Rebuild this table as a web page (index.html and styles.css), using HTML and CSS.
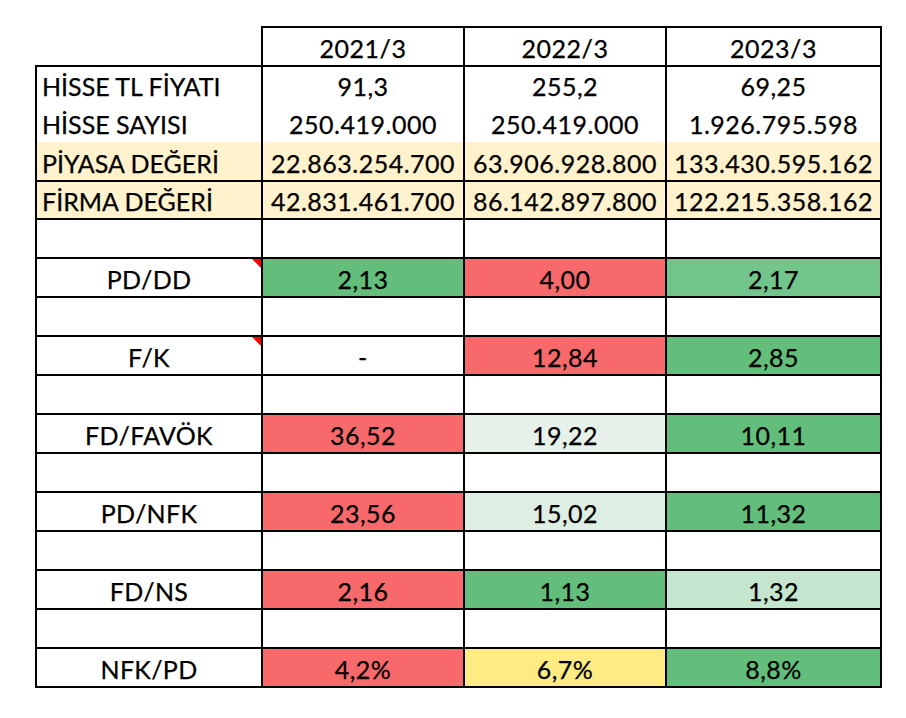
FILE: index.html
```html
<!DOCTYPE html>
<html lang="tr">
<head>
<meta charset="utf-8">
<title>Değerleme Tablosu</title>
<link rel="stylesheet" href="styles.css">
</head>
<body>
<div class="sheet">
<table class="grid">
  <colgroup>
    <col class="c-label"><col class="c-y1"><col class="c-y2"><col class="c-y3">
  </colgroup>
  <tr class="h-39">
    <td class="corner"></td>
    <td>2021/3</td><td>2022/3</td><td>2023/3</td>
  </tr>
  <tr class="h-38 open-bottom">
    <td class="left">HİSSE TL FİYATI</td><td>91,3</td><td>255,2</td><td>69,25</td>
  </tr>
  <tr class="h-38 open-top open-bottom">
    <td class="left">HİSSE SAYISI</td><td>250.419.000</td><td>250.419.000</td><td>1.926.795.598</td>
  </tr>
  <tr class="h-39 open-top beige">
    <td class="left">PİYASA DEĞERİ</td><td>22.863.254.700</td><td>63.906.928.800</td><td>133.430.595.162</td>
  </tr>
  <tr class="h-38 beige">
    <td class="left">FİRMA DEĞERİ</td><td>42.831.461.700</td><td>86.142.897.800</td><td>122.215.358.162</td>
  </tr>
  <tr class="h-39"><td></td><td></td><td></td><td></td></tr>
  <tr class="h-39">
    <td class="note">PD/DD<span class="flag"></span></td><td class="g">2,13</td><td class="r">4,00</td><td class="g2">2,17</td>
  </tr>
  <tr class="h-39"><td></td><td></td><td></td><td></td></tr>
  <tr class="h-39">
    <td class="note">F/K<span class="flag"></span></td><td>-</td><td class="r">12,84</td><td class="g">2,85</td>
  </tr>
  <tr class="h-39"><td></td><td></td><td></td><td></td></tr>
  <tr class="h-39">
    <td>FD/FAVÖK</td><td class="r">36,52</td><td class="w1">19,22</td><td class="g">10,11</td>
  </tr>
  <tr class="h-39"><td></td><td></td><td></td><td></td></tr>
  <tr class="h-39">
    <td>PD/NFK</td><td class="r">23,56</td><td class="w2">15,02</td><td class="g">11,32</td>
  </tr>
  <tr class="h-39"><td></td><td></td><td></td><td></td></tr>
  <tr class="h-39">
    <td>FD/NS</td><td class="r">2,16</td><td class="g">1,13</td><td class="w3">1,32</td>
  </tr>
  <tr class="h-39"><td></td><td></td><td></td><td></td></tr>
  <tr class="h-39">
    <td>NFK/PD</td><td class="r">4,2%</td><td class="y">6,7%</td><td class="g">8,8%</td>
  </tr>
</table>
</div>
</body>
</html>
```

FILE: styles.css
```css
html, body {
  margin: 0;
  padding: 0;
  background: #ffffff;
}

.sheet {
  padding: 26px 0 0 35px;
}

.grid {
  border-collapse: collapse;
  table-layout: fixed;
  width: 845px;
  font-family: Lato, "Open Sans", "Liberation Sans", sans-serif;
  font-size: 25px;
  color: #000000;
  -webkit-text-stroke: 0.25px #000000;
}

.c-label { width: 226px; }
.c-y1 { width: 202px; }
.c-y2 { width: 202px; }
.c-y3 { width: 215px; }

.grid td {
  border: 2px solid #000000;
  padding: 3px 0 0 0;
  text-align: center;
  vertical-align: middle;
  white-space: nowrap;
  line-height: 1;
  letter-spacing: 0.5px;
  position: relative;
}

.h-38 td { height: 33px; }
.h-39 td { height: 34px; }

.grid td.corner {
  border-top: none;
  border-left: none;
}

.grid .open-bottom td {
  border-bottom: none;
  padding-bottom: 1px;
}

.grid .open-top td {
  border-top: none;
  padding-top: 4px;
}

.grid td.note,
.grid td:first-child {
  letter-spacing: 0.3px;
}

.grid tr td.left {
  text-align: left;
  padding-left: 5px;
  letter-spacing: 0;
}

.beige td { background: #fff2cc; }

.g { background: #63be7b; }
.g2 { background: #73c68b; }
.r { background: #f8696b; }
.y { background: #ffeb84; }
.w1 { background: #e6f1ea; }
.w2 { background: #deeee3; }
.w3 { background: #c4e6cf; }

.flag {
  position: absolute;
  top: 0;
  right: 0;
  width: 0;
  height: 0;
  border-top: 9px solid #ff0000;
  border-left: 9px solid transparent;
}
```
